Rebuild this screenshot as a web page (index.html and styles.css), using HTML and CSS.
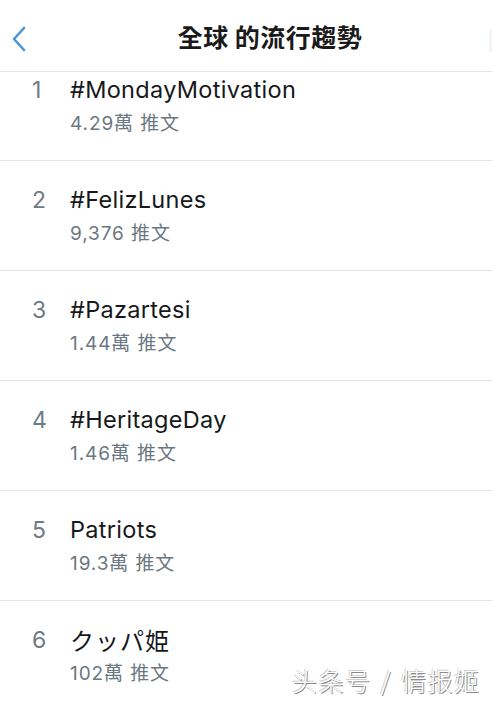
FILE: index.html
```html
<!DOCTYPE html>
<html lang="zh-Hant">
<head>
<meta charset="utf-8">
<title>全球 的流行趨勢</title>
<link rel="stylesheet" href="styles.css">
</head>
<body>
<div class="screen">
  <header class="topbar">
    <svg class="back" width="18" height="26" viewBox="0 0 18 26"><path d="M14 2 L4 13 L14 24" fill="none" stroke="#4a96d8" stroke-width="2.6" stroke-linecap="round" stroke-linejoin="round"/></svg>
    <h1 class="title">全球 的流行趨勢</h1>
    <span class="edge"></span>
  </header>
  <ul class="trends">
    <li class="trend"><span class="rank">1</span><span class="name">#MondayMotivation</span><span class="count">4.29萬 推文</span></li>
    <li class="trend"><span class="rank">2</span><span class="name">#FelizLunes</span><span class="count">9,376 推文</span></li>
    <li class="trend"><span class="rank">3</span><span class="name">#Pazartesi</span><span class="count">1.44萬 推文</span></li>
    <li class="trend"><span class="rank">4</span><span class="name">#HeritageDay</span><span class="count">1.46萬 推文</span></li>
    <li class="trend"><span class="rank">5</span><span class="name">Patriots</span><span class="count">19.3萬 推文</span></li>
    <li class="trend"><span class="rank">6</span><span class="name jp">クッパ姫</span><span class="count">102萬 推文</span></li>
  </ul>
  <div class="watermark">头条号 / 情报姬</div>
</div>
</body>
</html>
```

FILE: styles.css
```css
html, body {
  margin: 0;
  padding: 0;
  background: #ffffff;
}
.screen {
  position: relative;
  width: 492px;
  height: 701px;
  overflow: hidden;
  font-family: Inter, "Liberation Sans", "Noto Sans CJK TC", sans-serif;
}
.topbar {
  position: relative;
  z-index: 2;
  height: 71px;
  border-bottom: 1px solid #e3e6e9;
  background: #ffffff;
  display: flex;
  align-items: center;
  justify-content: center;
}
.back {
  position: absolute;
  left: 10px;
  top: 26px;
}
.title {
  margin: 0;
  font-family: "Noto Sans CJK TC", sans-serif;
  font-size: 25px;
  font-weight: 700;
  color: #1a1a1a;
  padding-left: 48px;
  letter-spacing: 0.5px;
}
.edge {
  position: absolute;
  right: 0;
  top: 30px;
  width: 3px;
  height: 22px;
  background: #f1f3f5;
}
.trends {
  list-style: none;
  margin: -21px 0 0 0;
  padding: 0;
}
.trend {
  border-bottom: 1px solid #e3e6e9;
  display: grid;
  grid-template-columns: 70px 1fr;
  grid-template-rows: 30px 26px;
  row-gap: 6px;
  align-content: start;
  padding-top: 24px;
  box-sizing: border-box;
  height: 110px;
}
.rank {
  grid-row: 1;
  grid-column: 1;
  padding-left: 32px;
  font-size: 23px;
  line-height: 30px;
  color: #6e7a85;
}
.name {
  grid-row: 1;
  grid-column: 2;
  font-size: 23.5px;
  line-height: 30px;
  color: #16181b;
  letter-spacing: 0.3px;
}
.name.jp {
  font-family: "Noto Sans CJK JP", sans-serif;
  font-size: 24px;
  letter-spacing: 1px;
}
.count {
  grid-row: 2;
  grid-column: 2;
  font-family: Inter, "Noto Sans CJK TC", sans-serif;
  font-size: 19px;
  line-height: 26px;
  color: #6b7782;
  letter-spacing: 0.9px;
}
.watermark {
  position: absolute;
  left: 292px;
  top: 662px;
  font-family: "Noto Sans CJK SC", sans-serif;
  font-size: 25px;
  font-weight: 300;
  color: #ffffff;
  text-shadow: 1px 1px 0 #8a8a8a, -1px -1px 0 #d0d0d0;
  letter-spacing: 1.5px;
  word-spacing: 2px;
}
```
